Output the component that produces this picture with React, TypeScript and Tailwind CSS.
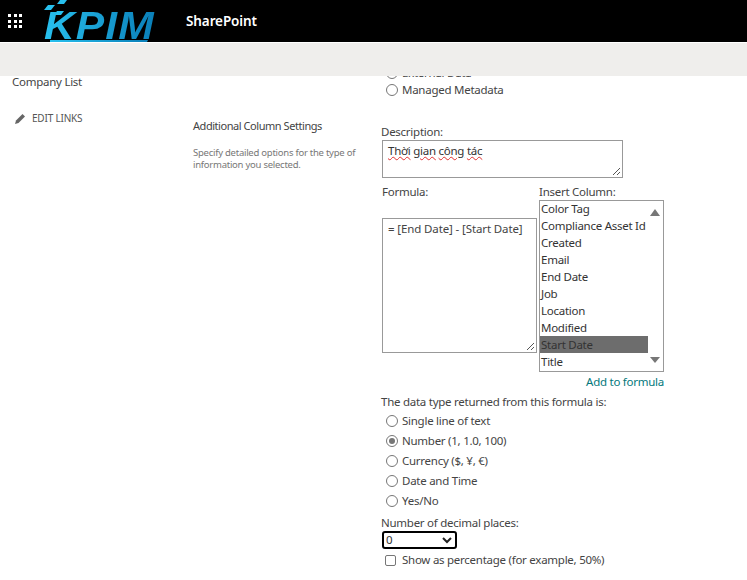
import React from "react";

const font = { fontFamily: '"Noto Sans", "Open Sans", sans-serif' };
const body = "text-[11.5px] tracking-[-0.26px]";

function Radio({ label, checked }: { label: string; checked?: boolean }) {
  return (
    <div className="flex items-center h-5 pl-[5px]">
      <span className="w-[12px] h-[12px] rounded-full border border-[#767676] bg-white flex items-center justify-center shrink-0">
        {checked && <span className="w-[6px] h-[6px] rounded-full bg-[#767676]" />}
      </span>
      <span className={`ml-[4px] ${body} text-[#444444] leading-none`}>{label}</span>
    </div>
  );
}

function Grip() {
  return (
    <svg width="10" height="10" viewBox="0 0 10 10" className="absolute right-px bottom-px">
      <path d="M9 2 L2 9 M9 6 L6 9" stroke="#555" strokeWidth="1" fill="none" />
    </svg>
  );
}

function Logo() {
  return (
    <div className="relative w-[118px] h-[42px] ml-[19px]">
      <svg width="118" height="42" viewBox="0 0 118 42" className="absolute left-0 top-0">
        <defs>
          <linearGradient id="g" x1="0" x2="1" y1="0" y2="0">
            <stop offset="0" stopColor="#28c0ee" />
            <stop offset="1" stopColor="#0a7fb8" />
          </linearGradient>
        </defs>
        <polygon points="7,5 14,5 10,10 3,10" fill="#28c0ee" />
        <polygon points="19,0 26,0 23,4 16,4" fill="#28c0ee" />
        <polygon points="16,11 23,11 20,15 13,15" fill="#28c0ee" />
        <polygon points="9,40 107,40 106,42 9,42" fill="url(#g)" />
      </svg>
      <span
        className="absolute block left-[3px] top-[10px] origin-left scale-x-[1.12] text-[38px] leading-[32px] font-bold italic tracking-[1px] text-transparent bg-clip-text bg-gradient-to-r from-[#28c0ee] to-[#0a7fb8]"
        style={{ fontFamily: '"Liberation Sans", sans-serif' }}
      >
        KPIM
      </span>
    </div>
  );
}

const cols = ["Color Tag", "Compliance Asset Id", "Created", "Email", "End Date", "Job", "Location", "Modified", "Start Date", "Title"];
const squiggle = "underline decoration-wavy decoration-[#e03030] decoration-1";

export default function App() {
  return (
    <div className="w-[747px] h-[580px] overflow-hidden bg-white flex flex-col" style={font}>
      <header className="h-[42px] bg-black flex items-center shrink-0">
        <div className="ml-[8px] grid grid-cols-[3px_3px_3px] gap-[2.5px]">
          {Array.from({ length: 9 }).map((_, i) => (
            <span key={i} className="w-[3px] h-[3px] bg-white" />
          ))}
        </div>
        <Logo />
        <span className="ml-[27px] text-white text-[13.5px] font-semibold tracking-[-0.1px]">SharePoint</span>
      </header>
      <div className="h-px bg-white shrink-0" />
      <div className="h-[33px] bg-[#efeeec] shrink-0" />
      <main className="flex-1 flex min-h-0 overflow-hidden">
        <nav className="w-[193px] shrink-0 pl-[12px]">
          <div className={`${body} text-[#444444] leading-3`}>Company List</div>
          <div className="flex items-center mt-[22px] pl-[3px]">
            <svg width="11" height="11" viewBox="0 0 11 11">
              <path d="M0 11 L1 7.5 L7.5 1 L10 3.5 L3.5 10 Z" fill="#666" />
            </svg>
            <span className="ml-[6px] text-[10px] tracking-[-0.2px] text-[#555555] leading-4">EDIT LINKS</span>
          </div>
        </nav>
        <section className="w-[188px] shrink-0 pt-[42px]">
          <div className="text-[11px] tracking-[-0.45px] text-[#444444] leading-4">Additional Column Settings</div>
          <p className="mt-[13px] text-[9.5px] tracking-[-0.25px] leading-[12px] text-[#777777]">
            Specify detailed options for the type of
            <br />
            information you selected.
          </p>
        </section>
        <section className="flex-1 min-w-0 mt-[-12px]">
          <div className="h-[17px] flex items-center">
            <Radio label="External Data" />
          </div>
          <div className="-mt-px">
            <Radio label="Managed Metadata" />
          </div>
          <div className={`mt-[24px] ${body} text-[#444444] leading-4`}>Description:</div>
          <div className={`relative ml-px w-[241px] h-[38px] border border-[#999999] px-[5px] py-[2px] ${body} text-[#333333] leading-4`}>
            <span className={squiggle}>Thời</span> <span className={squiggle}>gian</span>{" "}
            <span className={squiggle}>công</span> <span className={squiggle}>tác</span>
            <Grip />
          </div>
          <div className="flex mt-[6px] ml-px">
            <div className="w-[155px] mr-[2px] shrink-0">
              <div className={`${body} text-[#444444] leading-4`}>Formula:</div>
              <div className="relative mt-[18px] w-[155px] h-[135px] border border-[#999999] px-[5px] py-[2px] text-[11.5px] tracking-[-0.12px] text-[#444444] leading-4">
                = [End Date] - [Start Date]
                <Grip />
              </div>
            </div>
            <div className="w-[125px] shrink-0">
              <div className={`${body} text-[#444444] leading-4`}>Insert Column:</div>
              <div className={`relative w-[125px] h-[172px] border border-[#999999] ${body} text-[#333333]`}>
                <div className="-mt-px">
                  {cols.map((c) => (
                    <div key={c} className={`h-[17px] leading-[17px] w-[108px] pl-px whitespace-nowrap ${c === "Start Date" ? "bg-[#6d6d6d]" : ""}`}>
                      {c}
                    </div>
                  ))}
                </div>
                <svg width="10" height="7" viewBox="0 0 10 7" className="absolute right-[3px] top-[8px]">
                  <path d="M5 0 L10 7 L0 7 Z" fill="#777" />
                </svg>
                <svg width="10" height="6" viewBox="0 0 10 6" className="absolute right-[3px] bottom-[8px]">
                  <path d="M0 0 L10 0 L5 6 Z" fill="#777" />
                </svg>
              </div>
              <div className={`text-right ${body} text-[#03787c] leading-4 mt-[2px]`}>Add to formula</div>
            </div>
          </div>
          <div className={`mt-[4px] ${body} text-[#444444] leading-4`}>The data type returned from this formula is:</div>
          <div className="mt-px">
            <Radio label="Single line of text" />
            <Radio label="Number (1, 1.0, 100)" checked />
            <Radio label="Currency ($, ¥, €)" />
            <Radio label="Date and Time" />
            <Radio label="Yes/No" />
          </div>
          <div className={`mt-[4px] ${body} text-[#444444] leading-4`}>Number of decimal places:</div>
          <div className={`ml-px w-[75px] h-[18px] border-2 border-black rounded-[3px] flex items-center justify-between px-[2px] ${body} text-[#333333]`}>
            <span className="leading-none">0</span>
            <svg width="10" height="7" viewBox="0 0 10 7" className="mr-px">
              <path d="M1 1 L5 5 L9 1" stroke="#222" strokeWidth="2" fill="none" />
            </svg>
          </div>
          <div className="flex items-center mt-px pl-[4px] h-5">
            <span className="w-[11px] h-[11px] border border-[#767676] rounded-[2px] shrink-0" />
            <span className={`ml-[6px] ${body} text-[#444444] leading-none`}>Show as percentage (for example, 50%)</span>
          </div>
        </section>
      </main>
    </div>
  );
}
